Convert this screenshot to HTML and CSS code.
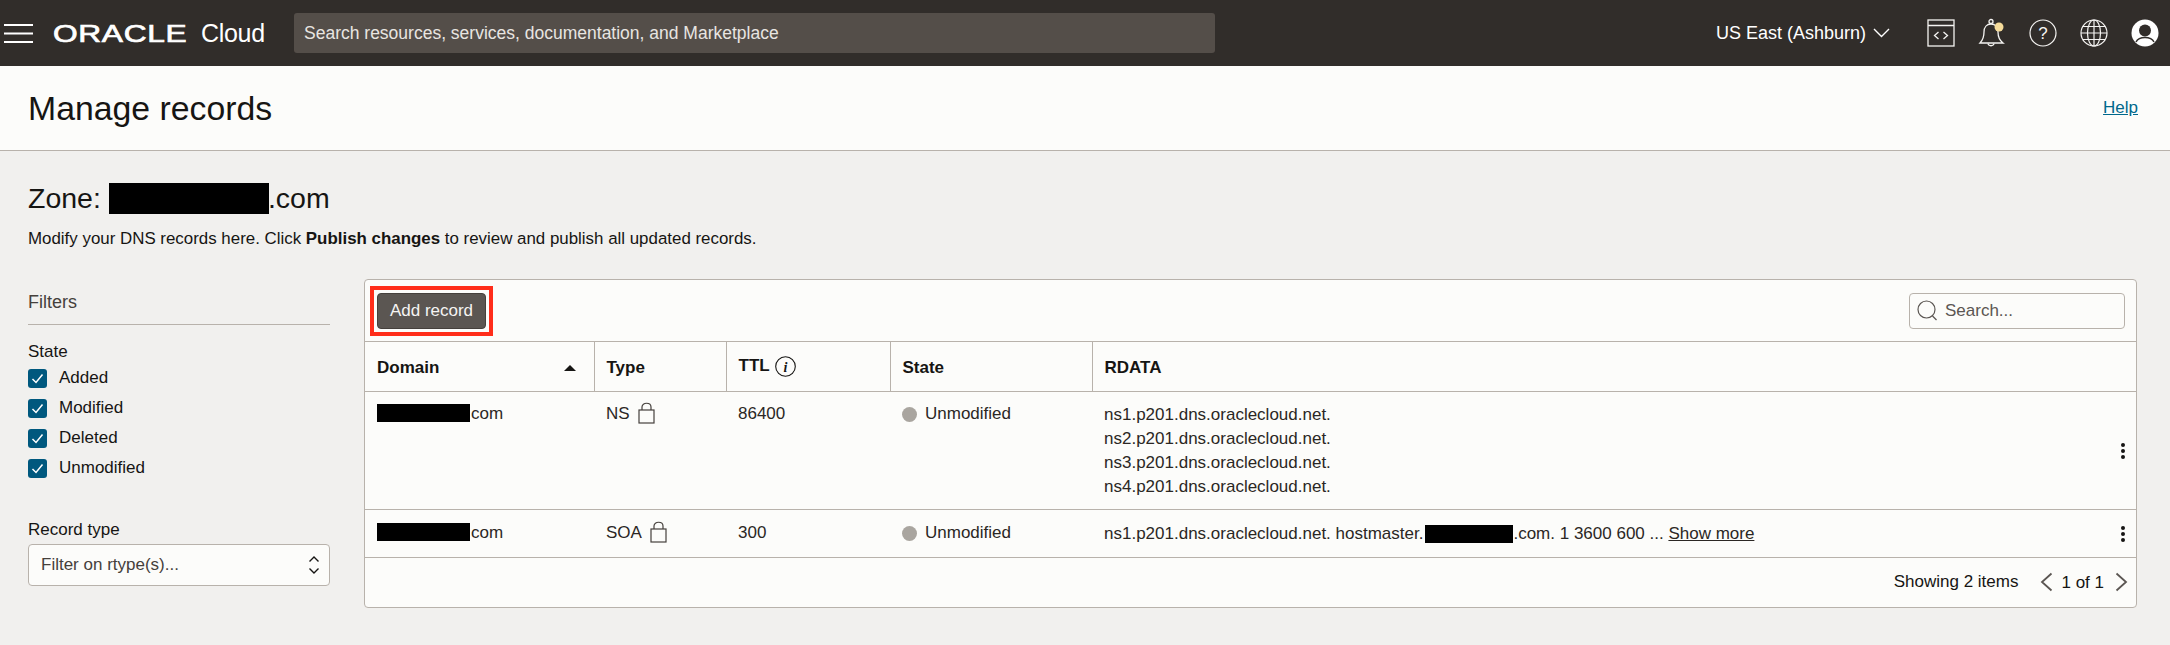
FILE: index.html
```html
<!DOCTYPE html>
<html lang="en">
<head>
    <meta charset="UTF-8">
    <meta name="viewport" content="width=device-width, initial-scale=1.0">
    <title>Manage records - Oracle Cloud</title>
    <link rel="stylesheet" href="styles.css">
</head>
<body>
    <div class="topbar">
        <svg class="burger" width="29" height="19" viewBox="0 0 29 19"><path d="M0 1h29M0 9.500h29M0 18h29" stroke="#fff" stroke-width="2"/></svg>
        <div class="logo"><span class="logo-word">ORACLE</span><span class="logo-cloud">Cloud</span></div>
        <div class="top-search">Search resources, services, documentation, and Marketplace</div>
        <div class="region">US East (Ashburn)
            <svg width="17" height="10" viewBox="0 0 17 10"><path d="M1 1l7.500 7.500L16 1" fill="none" stroke="#fff" stroke-width="1.400"/></svg>
        </div>
        <div class="top-icons">
            <svg width="28" height="28" viewBox="0 0 28 28" fill="none" stroke="#f5f4f2" stroke-width="1.300"><rect x="1" y="1" width="26" height="26"/><path d="M1 6.500h26M11.500 13l-4 3.500 4 3.500M16.500 13l4 3.500-4 3.500"/></svg>
            <svg width="28" height="30" viewBox="0 0 28 30" fill="none" stroke="#f5f4f2" stroke-width="1.300"><path d="M2 25c3-3 4-6 4-11 0-5 3-8 7-8s7 3 7 8c0 5 1 8 5 11z"/><circle cx="13" cy="3.500" r="2"/><path d="M10 25.500c.5 3 5.500 3 6 0"/><circle cx="21" cy="9" r="4.500" fill="#f6dc9a" stroke="none"/></svg>
            <svg width="28" height="28" viewBox="0 0 28 28" fill="none" stroke="#f5f4f2" stroke-width="1.200"><circle cx="14" cy="14" r="13"/><text x="14" y="19.500" class="help-mark">?</text></svg>
            <svg width="28" height="28" viewBox="0 0 28 28" fill="none" stroke="#f5f4f2" stroke-width="1.200"><circle cx="14" cy="14" r="13"/><ellipse cx="14" cy="14" rx="6.500" ry="13"/><path d="M14 1v26M1 14h26M3 7.500h22M3 20.500h22"/></svg>
            <svg width="28" height="28" viewBox="0 0 28 28"><circle cx="14" cy="14" r="13.500" fill="#fff"/><circle cx="14" cy="11.500" r="6" fill="#312d2a"/><path d="M5 23c2-4 5-4.500 9-4.500s7 .5 9 4.500" fill="none" stroke="#312d2a" stroke-width="1.500"/></svg>
        </div>
    </div>

    <div class="page-head">
        <h1>Manage records</h1>
        <a class="help-link">Help</a>
    </div>

    <div class="content">
        <h2 class="zone">Zone: <span class="redact zone-redact"></span>.com</h2>
        <p class="intro">Modify your DNS records here. Click <strong>Publish changes</strong> to review and publish all updated records.</p>

        <div class="columns">
            <div class="filters">
                <div class="filters-title">Filters</div>
                <div class="filter-label">State</div>
                <div class="check-row"><span class="check"><svg width="19" height="19" viewBox="0 0 19 19"><path d="M4.500 10l3.500 3.500 6.500-8" fill="none" stroke="#fff" stroke-width="1.500"/></svg></span>Added</div>
                <div class="check-row"><span class="check"><svg width="19" height="19" viewBox="0 0 19 19"><path d="M4.500 10l3.500 3.500 6.500-8" fill="none" stroke="#fff" stroke-width="1.500"/></svg></span>Modified</div>
                <div class="check-row"><span class="check"><svg width="19" height="19" viewBox="0 0 19 19"><path d="M4.500 10l3.500 3.500 6.500-8" fill="none" stroke="#fff" stroke-width="1.500"/></svg></span>Deleted</div>
                <div class="check-row"><span class="check"><svg width="19" height="19" viewBox="0 0 19 19"><path d="M4.500 10l3.500 3.500 6.500-8" fill="none" stroke="#fff" stroke-width="1.500"/></svg></span>Unmodified</div>
                <div class="filter-label type-label">Record type</div>
                <div class="select">Filter on rtype(s)...
                    <svg width="12" height="20" viewBox="0 0 12 20" fill="none" stroke="#161513" stroke-width="1.400"><path d="M1.500 6.500L6 2l4.500 4.500M1.500 13.500L6 18l4.500-4.500"/></svg>
                </div>
            </div>

            <div class="panel">
                <div class="toolbar">
                    <div class="add-outline"><button class="add-btn">Add record</button></div>
                    <div class="table-search">
                        <svg width="21" height="21" viewBox="0 0 21 21" fill="none" stroke="#5b5652" stroke-width="1.200"><circle cx="9.500" cy="9.500" r="8.500"/><path d="M15.500 16l4 4"/></svg>
                        Search...
                    </div>
                </div>
                <table class="records">
                    <thead>
                        <tr>
                            <th class="col-domain"><span class="th-sort">Domain<span class="sort-up"></span></span></th>
                            <th class="col-type">Type</th>
                            <th class="col-ttl"><span class="th-ttl">TTL <svg width="21" height="23" viewBox="0 0 21 23" fill="none" stroke="#161513" stroke-width="1.100"><circle cx="10.500" cy="11.500" r="9.800"/><text x="10.500" y="16.500" class="info-mark">i</text></svg></span></th>
                            <th class="col-state">State</th>
                            <th>RDATA</th>
                        </tr>
                    </thead>
                    <tbody>
                        <tr class="row-tall">
                            <td><span class="redact domain-redact"></span>com</td>
                            <td><span class="type-cell">NS
                                <svg width="17" height="22" viewBox="0 0 17 22" fill="none" stroke="#45403c" stroke-width="1.200"><rect x="1" y="8" width="15" height="13"/><path d="M4 8V5c0-5 9-5 9 0v3"/></svg></span></td>
                            <td>86400</td>
                            <td><span class="state"><span class="dot"></span>Unmodified</span></td>
                            <td class="rdata-cell">
                                <div class="rdata">ns1.p201.dns.oraclecloud.net.</div>
                                <div class="rdata">ns2.p201.dns.oraclecloud.net.</div>
                                <div class="rdata">ns3.p201.dns.oraclecloud.net.</div>
                                <div class="rdata">ns4.p201.dns.oraclecloud.net.</div>
                                <span class="kebab"><i></i><i></i><i></i></span>
                            </td>
                        </tr>
                        <tr class="row-short">
                            <td><span class="redact domain-redact"></span>com</td>
                            <td><span class="type-cell">SOA
                                <svg width="17" height="22" viewBox="0 0 17 22" fill="none" stroke="#45403c" stroke-width="1.200"><rect x="1" y="8" width="15" height="13"/><path d="M4 8V5c0-5 9-5 9 0v3"/></svg></span></td>
                            <td>300</td>
                            <td><span class="state"><span class="dot"></span>Unmodified</span></td>
                            <td class="rdata-cell">
                                <div class="rdata">ns1.p201.dns.oraclecloud.net. hostmaster.<span class="redact host-redact"></span>.com. 1 3600 600 ... <a class="show-more">Show more</a></div>
                                <span class="kebab"><i></i><i></i><i></i></span>
                            </td>
                        </tr>
                    </tbody>
                </table>
                <div class="pager">
                    <span>Showing 2 items</span>
                    <svg class="pager-prev" width="13" height="20" viewBox="0 0 13 20"><path d="M11.500 1.500L2 10l9.500 8.500" fill="none" stroke="#5b5652" stroke-width="1.800"/></svg>
                    <span class="pager-count">1 of 1</span>
                    <svg width="13" height="20" viewBox="0 0 13 20"><path d="M1.500 1.500L11 10l-9.500 8.500" fill="none" stroke="#5b5652" stroke-width="1.800"/></svg>
                </div>
            </div>
        </div>
    </div>
</body>
</html>
```

FILE: styles.css
```css
body {
    font-family: "Liberation Sans", Arial, sans-serif;
    background: #f1f0ee;
    color: #161513;
    margin: 0;
    padding: 0;
    font-size: 17px;
    height: 645px;
    overflow: hidden;
}
.topbar {
    height: 66px;
    background: #312d2a;
    display: flex;
    align-items: center;
    color: white;
}
.burger {
    margin-left: 4px;
}
.logo {
    margin-left: 20px;
    width: 241px;
    display: flex;
    align-items: baseline;
}
.logo-word {
    font-size: 24px;
    letter-spacing: 0.5px;
    width: 144px;
    display: inline-block;
    transform: scaleX(1.32);
    transform-origin: left;
    -webkit-text-stroke: 0.7px white;
}
.logo-cloud {
    font-size: 25px;
    margin-left: 4px;
    letter-spacing: -0.3px;
}
.top-search {
    width: 911px;
    height: 40px;
    line-height: 40px;
    padding-left: 10px;
    background: #544e49;
    border-radius: 3px;
    color: #e8e5e1;
    font-size: 17.500px;
}
.region {
    margin-left: auto;
    font-size: 18px;
    display: flex;
    align-items: center;
    gap: 7px;
}
.top-icons {
    display: flex;
    align-items: center;
    gap: 23px;
    margin-left: 37px;
    margin-right: 11px;
}
.help-mark {
    font-size: 17px;
    text-anchor: middle;
    fill: #f5f4f2;
    stroke: none;
}
.info-mark {
    font-size: 14px;
    font-family: "Liberation Serif", serif;
    font-style: italic;
    text-anchor: middle;
    fill: #161513;
    stroke: none;
}
.page-head {
    height: 84px;
    background: #fcfcfa;
    border-bottom: 1px solid #b8b2ab;
    display: flex;
    align-items: center;
    justify-content: space-between;
    padding: 0 32px 0 28px;
}
h1 {
    font-size: 33.800px;
    font-weight: normal;
    margin: 0;
}
.help-link {
    color: #00688c;
    text-decoration: underline;
}
.content {
    padding: 0 33px 0 28px;
}
.zone {
    font-size: 28.500px;
    font-weight: normal;
    margin: 30px 0 0;
    line-height: 34px;
    display: flex;
    align-items: center;
}
.redact {
    background: black;
    display: inline-block;
}
.zone-redact {
    width: 160px;
    height: 31px;
    margin: 0 -1px 0 8px;
}
.intro {
    margin: 14px 0 0;
    font-size: 16.900px;
    line-height: 20px;
}
.columns {
    display: flex;
    margin-top: 30px;
}
.filters {
    flex: 0 0 302px;
    margin-right: 34px;
    padding-top: 11px;
}
.filters-title {
    font-size: 18px;
    line-height: 24px;
    color: #45403c;
    padding-bottom: 10px;
    border-bottom: 1px solid #b8b2ab;
    margin-bottom: 17px;
}
.filter-label {
    line-height: 20px;
    margin-bottom: 1px;
}
.check-row {
    height: 30px;
    display: flex;
    align-items: center;
}
.check {
    width: 19px;
    height: 19px;
    background: #00587e;
    border-radius: 3px;
    margin-right: 12px;
    display: flex;
}
.type-label {
    margin-top: 37px;
    margin-bottom: 4px;
}
.select {
    height: 40px;
    background: #fcfcfa;
    border: 1px solid #b8b2ab;
    border-radius: 4px;
    display: flex;
    align-items: center;
    justify-content: space-between;
    padding: 0 9px 0 12px;
    color: #45403c;
}
.panel {
    flex-grow: 1;
    background: #fcfcfa;
    border: 1px solid #b8b2ab;
    border-radius: 4px;
    height: 327px;
}
.toolbar {
    height: 61px;
    display: flex;
    align-items: center;
    justify-content: space-between;
    padding: 0 11px 0 5px;
}
.add-outline {
    border: 4px solid #ff2d1a;
    padding: 3px;
    display: flex;
}
.add-btn {
    width: 109px;
    height: 36px;
    background: #5b5652;
    border: 1px solid #45403c;
    border-radius: 4px;
    color: #f5f4f2;
    font-family: inherit;
    font-size: 17px;
    padding: 0;
}
.table-search {
    height: 34px;
    width: 207px;
    border: 1px solid #b8b2ab;
    border-radius: 4px;
    display: flex;
    align-items: center;
    gap: 7px;
    padding-left: 7px;
    color: #5b5652;
}
.records {
    width: 100%;
    border-collapse: collapse;
    table-layout: fixed;
    font-size: 17px;
}
.records th {
    box-sizing: border-box;
    height: 50px;
    text-align: left;
    padding: 3px 12px 0;
    border-top: 1px solid #b8b2ab;
    border-bottom: 1px solid #b8b2ab;
    border-left: 1px solid #b8b2ab;
}
.records th:first-child {
    border-left: none;
}
.records td {
    padding: 13px 12px 0;
    vertical-align: top;
    border-bottom: 1px solid #b8b2ab;
    line-height: 20px;
    color: #2b2724;
}
.records .row-tall td {
    padding-top: 12px;
}
.col-domain { width: 229px; }
.col-type { width: 132px; }
.col-ttl { width: 164px; }
.col-state { width: 202px; }
.th-sort {
    display: flex;
    align-items: center;
    justify-content: space-between;
    padding-right: 6px;
}
.sort-up {
    width: 0;
    height: 0;
    border-left: 6px solid transparent;
    border-right: 6px solid transparent;
    border-bottom: 6px solid #161513;
}
.th-ttl {
    display: flex;
    align-items: center;
    gap: 5px;
    margin-top: -4px;
}
.row-tall { height: 118px; }
.row-short { height: 48px; }
.domain-redact {
    width: 93px;
    height: 18px;
    vertical-align: -3px;
    margin-right: 1px;
}
.host-redact {
    width: 88px;
    height: 18px;
    margin-left: 2px;
    vertical-align: -4px;
}
.type-cell {
    display: flex;
    gap: 8px;
}
.type-cell svg {
    margin-top: -2px;
}
.state {
    display: flex;
    align-items: center;
    gap: 8px;
}
.dot {
    width: 15px;
    height: 15px;
    border-radius: 50%;
    background: #a9a59f;
}
.rdata-cell {
    position: relative;
}
.rdata {
    line-height: 24px;
    margin-top: -1px;
    margin-bottom: 1px;
}
.show-more {
    text-decoration: underline;
}
.kebab {
    position: absolute;
    right: 11px;
    top: 50%;
    margin-top: -8px;
    display: flex;
    flex-direction: column;
    gap: 2px;
}
.kebab i {
    width: 4px;
    height: 4px;
    border-radius: 50%;
    background: #161513;
}
.pager {
    height: 47px;
    display: flex;
    align-items: center;
    justify-content: flex-end;
    padding-right: 8px;
}
.pager-prev {
    margin-left: 22px;
}
.pager-count {
    margin: 2px 11px 0 8px;
}
```
